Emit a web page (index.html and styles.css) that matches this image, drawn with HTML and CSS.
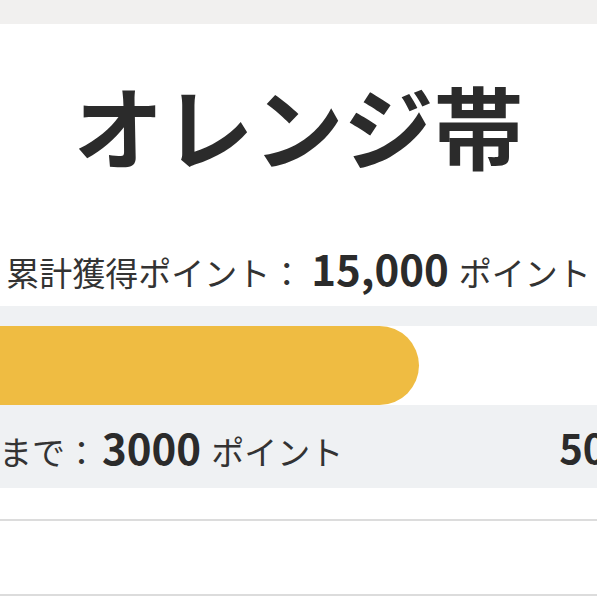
FILE: index.html
```html
<!DOCTYPE html>
<html lang="ja">
<head>
<meta charset="utf-8">
<link rel="stylesheet" href="styles.css">
</head>
<body>
  <div class="topbar"></div>
  <main class="card">
    <h1 class="belt">オレンジ帯</h1>
    <p class="total">累計獲得ポイント：<span class="num">15,000</span>ポイント</p>
    <section class="progress">
      <div class="track">
        <div class="fill" style="width: 519px"></div>
      </div>
      <div class="next">
        <p class="remain">次の帯まで：<span class="num">3000</span>ポイント</p>
        <span class="goal">50%</span>
      </div>
    </section>
    <div class="list">
      <div class="item"></div>
      <div class="item"></div>
    </div>
  </main>
</body>
</html>
```

FILE: styles.css
```css
html, body {
  margin: 0;
  padding: 0;
  background: #ffffff;
  overflow: hidden;
}

body {
  font-family: "Noto Sans CJK JP", "Noto Sans", sans-serif;
  color: #333333;
}

.topbar {
  height: 24px;
  background: #f1f0ef;
}

.card {
  width: 797px;
  margin-left: -100px;
}

.belt {
  margin: 0;
  padding-top: 55px;
  font-size: 90px;
  line-height: 1;
  font-weight: 700;
  text-align: center;
  color: #2b2b2b;
}

.total {
  margin: 0;
  padding-top: 78px;
  font-size: 33px;
  line-height: 1;
  text-align: center;
  color: #333333;
}

.num {
  font-size: 42px;
  font-weight: 700;
  color: #2b2b2b;
  margin: 0 10px 0 8px;
}

.progress {
  margin-top: 17px;
  background: #eff1f3;
  padding-top: 20px;
}

.track {
  height: 79px;
  background: #ffffff;
}

.fill {
  height: 100%;
  background: #efbc42;
  border-radius: 0 40px 40px 0;
}

.next {
  height: 83px;
  display: flex;
  align-items: center;
  justify-content: space-between;
  padding-right: 52px;
}

.remain {
  margin: 0;
  font-size: 33px;
  line-height: 1;
}

.remain .num {
  margin: 0 10px 0 4px;
}

.goal {
  font-size: 40px;
  font-weight: 700;
  color: #2b2b2b;
  line-height: 1;
}

.list {
  padding-top: 31px;
}

.item {
  height: 73px;
  border-top: 2px solid #dcdcdc;
}
```
